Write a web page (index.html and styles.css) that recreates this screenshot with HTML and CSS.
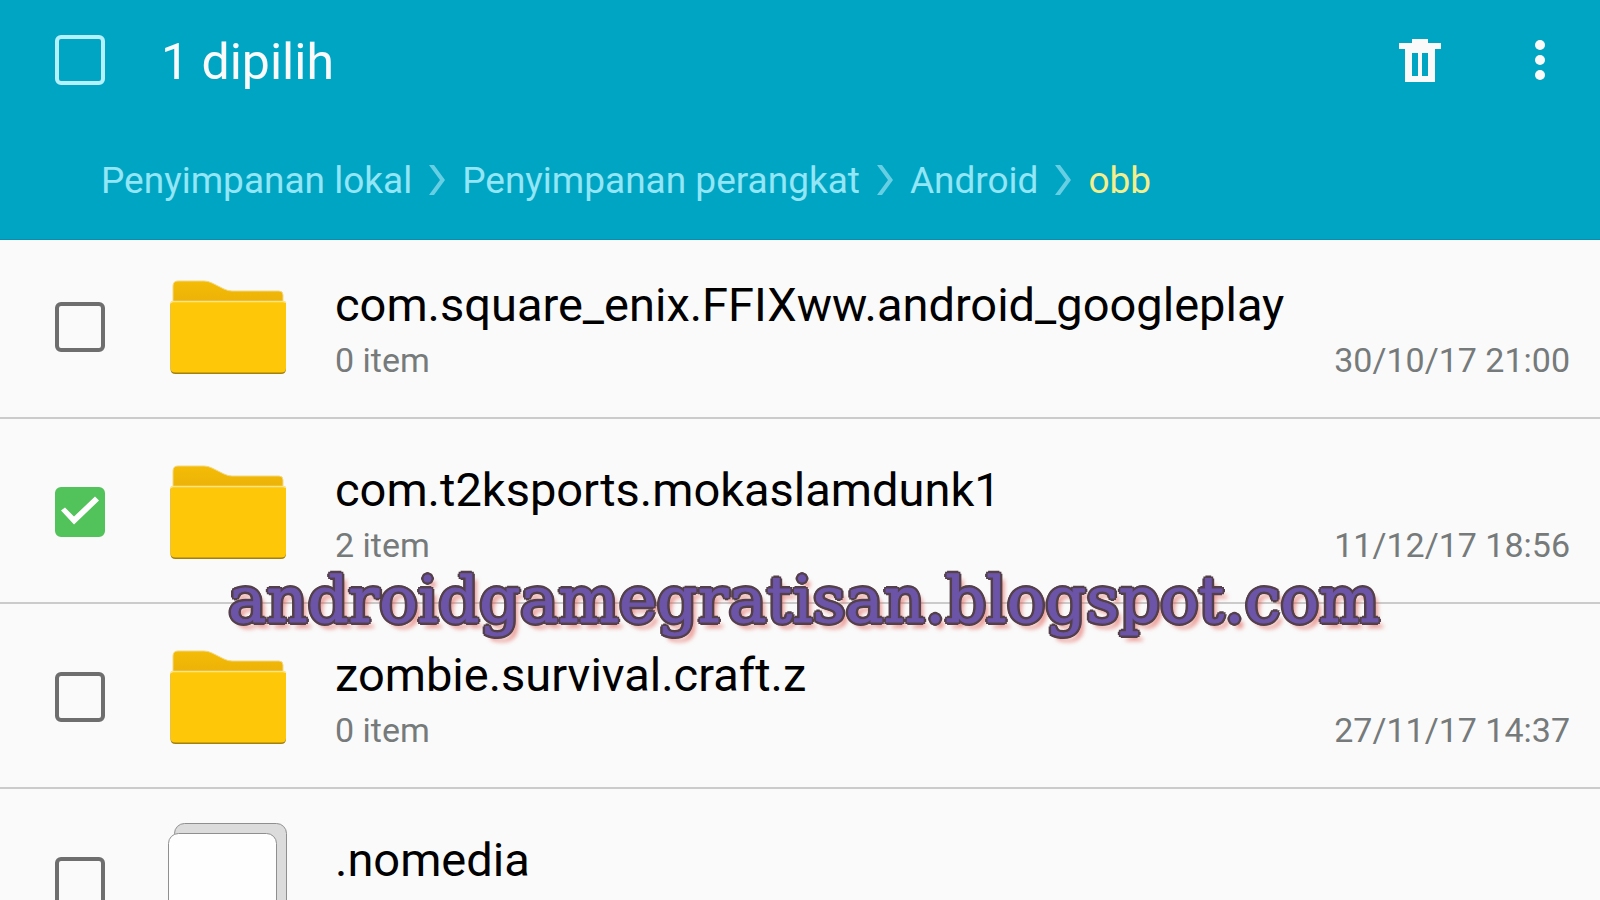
FILE: index.html
```html
<!DOCTYPE html>
<html lang="id">
<head>
    <meta charset="UTF-8">
    <meta name="viewport" content="width=device-width, initial-scale=1.0">
    <title>obb</title>
    <link rel="stylesheet" href="styles.css">
</head>
<body>
    <!-- Shared icons -->
    <svg class="icon-defs" aria-hidden="true">
        <defs>
            <linearGradient id="tabFill" x1="0" y1="0" x2="0" y2="1">
                <stop offset="0" stop-color="#f4bc05"/>
                <stop offset="1" stop-color="#eab00a"/>
            </linearGradient>
        </defs>
        <symbol id="folder" viewBox="0 0 120 118">
            <path d="M5 39V18q0-5 5-5h26q4 0 8 2l12 6q4 2 8 2h47q4 0 4 4v12z" fill="url(#tabFill)" stroke="#f3d880" stroke-width="1"/>
            <path d="M2.5 37q0-3 3-3h109.500q3 0 3 3v64q0 5-5 5H7.500q-5 0-5-5z" fill="#a37f0c"/>
            <path d="M2.500 36q0-3 3-3h109.500q3 0 3 3v64q0 4.500-5 4.500H7.500q-5 0-5-4.500z" fill="#fec809"/>
            <path d="M3 35q0-1.500 2.500-1.500h109q3 0 3 1.500" fill="none" stroke="#fbe38a" stroke-width="1.500"/>
        </symbol>
        <symbol id="chevron" viewBox="0 0 18 32">
            <path d="M1 1h5l11 15L6 31H1l11-15z" fill="currentColor"/>
        </symbol>
    </svg>

    <header class="header">
        <div class="action-bar">
            <input type="checkbox" class="check check-all" id="selectAll">
            <label class="title" for="selectAll">1 dipilih</label>
            <div class="actions">
                <button class="icon-btn" aria-label="Hapus">
                    <svg width="42" height="43" viewBox="0 0 42 43">
                        <path fill="#fafafa" fill-rule="evenodd" d="M13 0h16v4h13v6h-6v33H6V10H0V4h13zM13 14v23h6V14zM23 14v23h6V14z"/>
                    </svg>
                </button>
                <button class="icon-btn" aria-label="Opsi lainnya">
                    <svg width="10" height="40" viewBox="0 0 10 40">
                        <circle cx="5" cy="5" r="5" fill="#fafafa"/>
                        <circle cx="5" cy="20" r="5" fill="#fafafa"/>
                        <circle cx="5" cy="35" r="5" fill="#fafafa"/>
                    </svg>
                </button>
            </div>
        </div>
        <nav class="breadcrumb">
            <a href="#">Penyimpanan lokal</a>
            <svg class="chevron"><use href="#chevron"/></svg>
            <a href="#">Penyimpanan perangkat</a>
            <svg class="chevron"><use href="#chevron"/></svg>
            <a href="#">Android</a>
            <svg class="chevron"><use href="#chevron"/></svg>
            <a href="#" class="current">obb</a>
        </nav>
    </header>

    <main class="content">
        <ul class="file-list">
            <li class="row">
                <input type="checkbox" class="check" id="file1">
                <svg class="file-icon"><use href="#folder"/></svg>
                <div class="info">
                    <label class="name" for="file1">com.square_enix.FFIXww.android_googleplay</label>
                    <div class="meta"><span>0 item</span><time>30/10/17 21:00</time></div>
                </div>
            </li>
            <li class="row">
                <input type="checkbox" class="check" id="file2" checked>
                <svg class="file-icon"><use href="#folder"/></svg>
                <div class="info">
                    <label class="name" for="file2">com.t2ksports.mokaslamdunk1</label>
                    <div class="meta"><span>2 item</span><time>11/12/17 18:56</time></div>
                </div>
                <p class="watermark">androidgamegratisan.blogspot.com</p>
            </li>
            <li class="row">
                <input type="checkbox" class="check" id="file3">
                <svg class="file-icon"><use href="#folder"/></svg>
                <div class="info">
                    <label class="name" for="file3">zombie.survival.craft.z</label>
                    <div class="meta"><span>0 item</span><time>27/11/17 14:37</time></div>
                </div>
            </li>
            <li class="row">
                <input type="checkbox" class="check" id="file4">
                <svg class="file-icon" viewBox="0 0 120 118">
                    <rect x="6.500" y="0.500" width="112" height="106" rx="10" fill="#dcdcdc" stroke="#8f8f8f"/>
                    <rect x="0.500" y="10.500" width="108" height="107" rx="10" fill="#fefefe" stroke="#8f8f8f"/>
                </svg>
                <div class="info">
                    <label class="name" for="file4">.nomedia</label>
                </div>
            </li>
        </ul>
    </main>
</body>
</html>
```

FILE: styles.css
```css
* {
    margin: 0;
    padding: 0;
    box-sizing: border-box;
}

html {
    scrollbar-width: none;
}

body {
    font-family: Roboto, 'Noto Sans', sans-serif;
    background: #fafafa;
    color: #000;
    min-height: 100vh;
}

.icon-defs {
    position: absolute;
    width: 0;
    height: 0;
}

.header {
    background: #00a5c3;
    height: 240px;
    border-bottom: 1px solid #0590ad;
}

.action-bar {
    display: flex;
    align-items: center;
    height: 120px;
    padding: 0 55px;
}

.title {
    margin-left: 56px;
    font-size: 50px;
    line-height: 60px;
    padding-top: 4px;
    color: #fafafa;
}

.actions {
    display: flex;
    align-items: center;
    gap: 94px;
    margin-left: auto;
}

.icon-btn {
    display: flex;
    background: none;
    border: none;
    cursor: pointer;
}

.breadcrumb {
    display: flex;
    align-items: center;
    height: 120px;
    padding: 0 101px;
    gap: 16px;
    font-size: 37px;
}

.breadcrumb a {
    color: #93e6f5;
    text-decoration: none;
}

.breadcrumb .current {
    color: #f5ee8c;
}

.chevron {
    width: 18px;
    height: 32px;
    color: #66cfe3;
}

/* Checkboxes */
.check {
    appearance: none;
    flex: none;
    width: 50px;
    height: 50px;
    border: 4px solid #6e6e6e;
    border-radius: 6px;
    cursor: pointer;
}

.check-all {
    border-color: #b5f1fa;
}

.check:checked {
    position: relative;
    background: #52c35a;
    border-color: #52c35a;
}

.check:checked::after {
    content: '';
    position: absolute;
    inset: 0;
    background: #fff;
    clip-path: polygon(2px 20px, 6px 17px, 15px 26px, 36px 6px, 40px 10px, 15px 34px);
}

/* File list */
.file-list {
    list-style: none;
}

.row {
    position: relative;
    display: flex;
    align-items: center;
    height: 185px;
    padding: 2px 30px 0 55px;
    border-bottom: 2px solid #cbcbcb;
}

.row:first-child {
    height: 179px;
    padding-bottom: 6px;
}

.file-icon {
    flex: none;
    width: 120px;
    height: 118px;
    margin-left: 63px;
}

.info {
    flex: 1;
    align-self: flex-start;
    margin-left: 47px;
    padding-top: 38px;
}

.row:first-child .info {
    padding-top: 32px;
}

.name {
    display: block;
    font-size: 47px;
    line-height: 62px;
}

.meta {
    display: flex;
    justify-content: space-between;
    padding-top: 4px;
    font-size: 34px;
    line-height: 40px;
    color: #767a7a;
}

.watermark {
    position: absolute;
    left: 8px;
    right: 0;
    bottom: -30px;
    z-index: 1;
    text-align: center;
    white-space: nowrap;
    font-family: 'DejaVu Serif', serif;
    font-size: 64px;
    line-height: 64px;
    color: #6c55a8;
    -webkit-text-stroke: 1px #6c55a8;
    text-shadow:
        3px 0 #54404a, -3px 0 #54404a, 0 3px #54404a, 0 -3px #54404a,
        2px 2px #54404a, -2px 2px #54404a, 2px -2px #54404a, -2px -2px #54404a,
        5px 6px 4px rgba(225, 90, 80, 0.6);
    pointer-events: none;
}
```
